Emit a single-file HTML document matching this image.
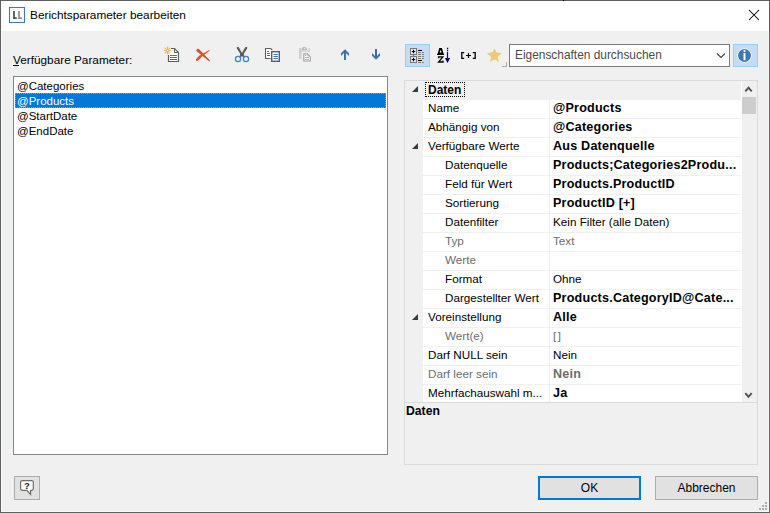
<!DOCTYPE html>
<html><head><meta charset="utf-8">
<style>
*{margin:0;padding:0;box-sizing:border-box}
html,body{width:770px;height:513px;overflow:hidden;background:#f0f0f0}
body{position:relative;font-family:"Liberation Sans",sans-serif;font-size:11.5px;color:#000}
.a{position:absolute}
.t{position:absolute;white-space:nowrap;line-height:15px}
#frame{position:absolute;left:0;top:0;width:770px;height:513px;border:1px solid #5f5f5f}
#frame2{position:absolute;left:1px;top:31px;width:768px;height:481px;border:1px solid #f9f9f9;border-top:0}
#title{position:absolute;left:0;top:0;width:770px;height:31px;background:#fff}
.lb{position:absolute;left:13px;top:76px;width:375px;height:379px;border:1px solid #828790;background:#fff}
.pg{position:absolute;left:404px;top:80px;width:354px;height:385px;border:1px solid #dadada;background:#f0f0f0}
.row{position:absolute;left:18px;width:319px;height:18px;background:#fff}
.nm{position:absolute;left:5px;top:-1px;line-height:18px;white-space:nowrap;font-size:11.7px}
.vl{position:absolute;left:130px;top:-1px;line-height:18px;white-space:nowrap;font-size:11.7px}
.vl.b{font-size:12.6px;letter-spacing:0.2px}
.dv{position:absolute;left:126px;top:0;width:1px;height:18px;background:#f0f0f0}
.b{font-weight:bold}
.g{color:#6d6d6d}
.nm.ind{left:22px}
.tri{position:absolute;left:7px;width:0;height:0;border-style:solid;border-width:0 0 6px 6px;border-color:transparent transparent #3a3a3a transparent}
.btn{position:absolute;top:476px;height:24px;background:#e1e1e1;border:1px solid #adadad;text-align:center;line-height:22px;font-size:12px}
</style></head><body>
<div id="win0">
  <div id="title">
    <!-- app icon -->
    <svg class="a" style="left:0;top:0" width="30" height="30" viewBox="0 0 30 30">
      <rect x="9.5" y="7.5" width="15" height="15" fill="#fff" stroke="#3a78b8" stroke-width="1.1"/>
      <path d="M14 11 V18.2 H16.8" fill="none" stroke="#4e4e4e" stroke-width="1.7"/>
      <path d="M19 11 V18.2 H21.9" fill="none" stroke="#8e8e8e" stroke-width="1.7"/>
    </svg>
    <div class="t" style="left:30px;top:8px;font-size:11.83px">Berichtsparameter bearbeiten</div>
    <svg class="a" style="left:748px;top:9px" width="12" height="12" viewBox="0 0 12 12"><path d="M1 1 L11 11 M11 1 L1 11" stroke="#000" stroke-width="1.05"/></svg>
  </div>

  <!-- left label -->
  <div class="t" style="left:13px;top:53px;font-size:11.8px">Verfügbare Parameter:</div>
  <div class="a" style="left:13px;top:65px;width:6px;height:1px;background:#000"></div>

  <!-- toolbar icons -->
<svg class="a" style="left:0;top:0" width="770" height="513" viewBox="0 0 770 513">
<!-- new doc -->
<path d="M168.5 55 V61.5 H178.5 V52.5 L174.5 48.5 H171" fill="#fff" stroke="#5f5f5f" stroke-width="1.2"/>
<path d="M174.5 48.5 V52.5 H178.5" fill="none" stroke="#5f5f5f" stroke-width="1"/>
<path d="M170 55.5 H177 M170 57.5 H177 M170 59.5 H177" stroke="#3c74b4" stroke-width="1"/>
<g stroke="#e9b35f" stroke-width="1.1">
<circle cx="167.5" cy="50.5" r="1.3" fill="none"/>
<path d="M167.5 46.8 V48.7 M167.5 52.3 V54.2 M163.8 50.5 H165.7 M169.3 50.5 H171.2 M164.9 47.9 L166.2 49.2 M168.8 51.8 L170.1 53.1 M170.1 47.9 L168.8 49.2 M166.2 51.8 L164.9 53.1"/>
</g>
<!-- red X -->
<path d="M196.3 50.2 C197 48.6 198.4 48.6 199.4 49.4 L210 60.6 L209.4 61.4 L197.6 52 C196.6 51.4 196.1 50.9 196.3 50.2 Z" fill="#d9522b"/>
<path d="M209.8 50.4 L209.3 49.9 L200 55.2 C198.2 56.6 196.6 58.2 196 59.6 C195.8 60.6 196.8 61.2 197.6 60.8 C199 59.8 201 57.4 202 56.4 Z" fill="#d9522b"/>
<!-- scissors -->
<path d="M236.8 47.3 C237.4 46.9 238.4 46.9 238.9 47.4 L242.8 54.2 L241.4 55.4 L237.3 49.2 C236.8 48.5 236.6 47.8 236.8 47.3 Z" fill="#5a5a5a"/>
<path d="M247.2 47.3 C246.6 46.9 245.6 46.9 245.1 47.4 L241.2 54.2 L242.6 55.4 L246.7 49.2 C247.2 48.5 247.4 47.8 247.2 47.3 Z" fill="#5a5a5a"/>
<path d="M240.4 53.2 L243.6 53.2 L244.6 57 L243 57.4 L242 55.8 L241 57.4 L239.4 57 Z" fill="#5a5a5a"/>
<circle cx="238" cy="59" r="2.6" fill="none" stroke="#4180c4" stroke-width="1.2"/>
<circle cx="246" cy="59" r="2.6" fill="none" stroke="#4180c4" stroke-width="1.2"/>
<!-- copy -->
<path d="M270.5 58.5 H265.5 V48.5 H270.5 L272.3 50" fill="#fff" stroke="#5f5f5f" stroke-width="1.1"/>
<path d="M267 51.5 H269 M267 53.5 H270 M267 55.5 H270" stroke="#3c74b4" stroke-width="1"/>
<rect x="271.7" y="51.7" width="7.6" height="9.6" fill="#fff" stroke="#5f5f5f" stroke-width="1.4"/>
<path d="M273.5 54.5 H277.8 M273.5 56.5 H277.8 M273.5 58.5 H277.8" stroke="#3c74b4" stroke-width="1"/>
<!-- paste disabled -->
<rect x="299" y="48" width="2.5" height="11" fill="#d0d0d0"/>
<rect x="301" y="50.3" width="9" height="1.3" fill="#d0d0d0"/>
<rect x="308.5" y="48" width="1.4" height="3.5" fill="#d0d0d0"/>
<path d="M302 49.9 V48.6 C302 47.5 303 47 304.4 47 C305.8 47 306.8 47.5 306.8 48.6 V49.9 Z M304.4 47.8 a0.7 0.7 0 1 0 0.01 0 Z" fill="#b8b8b8" fill-rule="evenodd"/>
<path d="M303.8 53.8 H307.4 L310.3 56.7 V61 H303.8 Z" fill="#fff" stroke="#a4a4a4" stroke-width="1.2"/>
<rect x="305" y="54.8" width="1.2" height="1.2" fill="#b4b4b4"/>
<circle cx="308.2" cy="55.6" r="0.9" fill="#b4b4b4"/>
<path d="M305 57.5 H309 M305 59.4 H309" stroke="#b0b0b0" stroke-width="1"/>
<!-- up arrow -->
<path d="M345 49.2 L349 53.2 V55.9 L346 52.9 V60 H344 V52.9 L341 55.9 V53.2 Z" fill="#3a72b0"/>
<!-- down arrow -->
<path d="M376 59.8 L380 55.8 V53.1 L377 56.1 V49 H375 V56.1 L372 53.1 V55.8 Z" fill="#3a72b0"/>
</svg>

  <!-- right toolbar -->
<svg class="a" style="left:0;top:0" width="770" height="513" viewBox="0 0 770 513">
<!-- categorized button -->
<rect x="405.5" y="44.5" width="24" height="22" fill="#c4ddf3" stroke="#99cdf6" stroke-width="1"/>
<rect x="410.5" y="48.5" width="6" height="6" fill="#d8ecfa" stroke="#7d7572" stroke-width="1"/>
<rect x="410.5" y="56.5" width="6" height="6" fill="#d8ecfa" stroke="#7d7572" stroke-width="1"/>
<path d="M413.5 55 V56" stroke="#7d7572"/>
<path d="M411.8 51.5 H415.2 M413.5 49.8 V53.2 M411.8 59.5 H415.2 M413.5 57.8 V61.2" stroke="#000" stroke-width="1.15"/>
<path d="M418 50.5 H422 M418 60.5 H422" stroke="#000" stroke-width="1"/>
<path d="M418 52.5 H421 M422 52.5 H424 M418 54.5 H421 M422 54.5 H424 M418 56.5 H421 M422 56.5 H424 M418 58.5 H421 M422 58.5 H424 M418 62.5 H421 M422 62.5 H424" stroke="#8a7f75" stroke-width="1"/>
<!-- AZ -->
<path d="M439.3 48 H441.9 L443.6 53.8 H444.1 V55 H437 V53.8 H437.6 Z M440.2 50.6 L439.6 52.6 H441.6 L441 50.6 Z" fill="#000" fill-rule="evenodd"/>
<path d="M438.6 58.2 V56.8 H442.8 L438.6 62 H443 V60.4" fill="none" stroke="#000" stroke-width="1.3"/>
<rect x="446.9" y="47.7" width="1.3" height="1.3" fill="#000080"/>
<rect x="446.9" y="49.7" width="1.3" height="1.3" fill="#000080"/>
<path d="M447.5 51.8 V59" stroke="#000080" stroke-width="1.2"/>
<path d="M444.9 58 H450.1 L447.5 62.9 Z" fill="#000080"/>
<!-- [+] -->
<path d="M464.2 52.7 H461.8 V58.3 H464.2 M472.8 52.7 H475.2 V58.3 H472.8" fill="none" stroke="#000" stroke-width="1.3"/>
<path d="M466 55.5 H471 M468.5 53 V58" stroke="#000" stroke-width="1.2"/>
<!-- star -->
<path d="M494.45 48.3 L496.3 52.3 L501.8 53.3 L497.6 57 L499 62 L494.45 59.4 L489.9 62 L491.3 57 L487.1 53.3 L492.6 52.3 Z" fill="#eec778"/>
<path d="M506.5 62 V66.5 H502" fill="none" stroke="#a8a8a8" stroke-width="1"/>
<!-- combobox -->
<rect x="509.5" y="44.5" width="220" height="22" fill="#fff" stroke="#7a7a7a" stroke-width="1"/>
<path d="M717 53.5 L721 57.5 L725 53.5" fill="none" stroke="#404040" stroke-width="1.1"/>
<!-- info button -->
<rect x="733.5" y="44.5" width="24" height="22" fill="#c4ddf3" stroke="#99cdf6" stroke-width="1"/>
<circle cx="744.5" cy="55.5" r="7.2" fill="#fff"/>
<circle cx="744.5" cy="55.5" r="6.5" fill="#3f77b1"/>
<rect x="743.4" y="50" width="2.2" height="2" rx="0.8" fill="#fff"/>
<rect x="743.5" y="53" width="2" height="7.2" fill="#fff"/>
</svg>
<div class="t" style="left:515px;top:48px;font-size:11.9px;color:#4a4a4a">Eigenschaften durchsuchen</div>

  <!-- listbox -->
  <div class="lb">
    <div class="t" style="left:3px;top:2px">@Categories</div>
    <div class="a" style="left:1px;top:16px;width:371px;height:15px;background:#0078d7;outline:1px dotted #ff8728;outline-offset:-1px"></div>
    <div class="t" style="left:3px;top:17px;color:#fff">@Products</div>
    <div class="t" style="left:3px;top:32px">@StartDate</div>
    <div class="t" style="left:3px;top:47px">@EndDate</div>
  </div>

  <!-- property grid -->
  <div class="pg" id="pg">
<div class="tri" style="top:5px"></div>
<div class="a" style="left:20px;top:1px;width:40px;height:15px;border:1px dotted #000"></div>
<div class="t b" style="left:23px;top:1px;font-size:12px;line-height:18px;top:0">Daten</div>
<div class="row" style="top:19px"><div class="nm">Name</div><div class="dv"></div><div class="vl b">@Products</div></div>
<div class="row" style="top:38px"><div class="nm">Abhängig von</div><div class="dv"></div><div class="vl b">@Categories</div></div>
<div class="row" style="top:57px"><div class="nm">Verfügbare Werte</div><div class="dv"></div><div class="vl b">Aus Datenquelle</div></div>
<div class="tri" style="top:62px"></div>
<div class="row" style="top:76px"><div class="nm ind">Datenquelle</div><div class="dv"></div><div class="vl b">Products;Categories2Produ...</div></div>
<div class="row" style="top:95px"><div class="nm ind">Feld für Wert</div><div class="dv"></div><div class="vl b">Products.ProductID</div></div>
<div class="row" style="top:114px"><div class="nm ind">Sortierung</div><div class="dv"></div><div class="vl b">ProductID [+]</div></div>
<div class="row" style="top:133px"><div class="nm ind">Datenfilter</div><div class="dv"></div><div class="vl ">Kein Filter (alle Daten)</div></div>
<div class="row" style="top:152px"><div class="nm ind g">Typ</div><div class="dv"></div><div class="vl g">Text</div></div>
<div class="row" style="top:171px"><div class="nm ind g">Werte</div><div class="dv"></div><div class="vl g"></div></div>
<div class="row" style="top:190px"><div class="nm ind">Format</div><div class="dv"></div><div class="vl ">Ohne</div></div>
<div class="row" style="top:209px"><div class="nm ind">Dargestellter Wert</div><div class="dv"></div><div class="vl b">Products.CategoryID@Cate...</div></div>
<div class="row" style="top:228px"><div class="nm">Voreinstellung</div><div class="dv"></div><div class="vl b">Alle</div></div>
<div class="tri" style="top:233px"></div>
<div class="row" style="top:247px"><div class="nm ind g">Wert(e)</div><div class="dv"></div><div class="vl g" style="letter-spacing:1.5px">[]</div></div>
<div class="row" style="top:266px"><div class="nm">Darf NULL sein</div><div class="dv"></div><div class="vl ">Nein</div></div>
<div class="row" style="top:285px"><div class="nm g">Darf leer sein</div><div class="dv"></div><div class="vl b g">Nein</div></div>
<div class="row" style="top:304px"><div class="nm">Mehrfachauswahl m...</div><div class="dv"></div><div class="vl b">Ja</div></div>
<svg class="a" style="left:338px;top:4px" width="13" height="9" viewBox="0 0 13 9"><path d="M2.3 6.3 L5.5 2.6 L8.7 6.3" fill="none" stroke="#505050" stroke-width="1.9"/></svg>
<div class="a" style="left:336px;top:0;width:1px;height:321px;background:#fff"></div>
<div class="a" style="left:337px;top:16px;width:14px;height:17px;background:#cdcdcd"></div>
<svg class="a" style="left:338px;top:309px" width="13" height="9" viewBox="0 0 13 9"><path d="M2.3 3.2 L5.5 6.9 L8.7 3.2" fill="none" stroke="#505050" stroke-width="1.9"/></svg>
<div class="a" style="left:0;top:321px;width:352px;height:62px;background:#f0f0f0;border-top:1px solid #dadada"></div>
<div class="t b" style="left:1px;top:321px;font-size:12.2px;line-height:18px">Daten</div>
  </div>

  <!-- bottom buttons -->
  <div class="btn" style="left:14px;width:26px"></div>
  <svg class="a" style="left:0;top:460px" width="60" height="53" viewBox="0 460 60 53">
    <path d="M22.3 480.6 H31.6 Q33.3 480.6 33.3 482.3 V488.6 Q33.3 490.3 31.6 490.3 H30.6 V494.4 L26.9 490.3 H22.3 Q20.6 490.3 20.6 488.6 V482.3 Q20.6 480.6 22.3 480.6 Z" fill="#fff" stroke="#6e6e6e" stroke-width="1.2"/>
    <text x="26.9" y="489" font-family="Liberation Sans" font-weight="bold" font-size="9.5" text-anchor="middle" fill="#222">?</text>
  </svg>
  <svg class="a" style="left:755px;top:498px" width="15" height="15" viewBox="755 498 15 15">
    <path d="M765 502h2v2h-2zM762 505h2v2h-2zM765 505h2v2h-2zM759 508h2v2h-2zM762 508h2v2h-2zM765 508h2v2h-2z" fill="#adadad"/>
  </svg>
  <div class="btn" style="left:538px;width:103px;border:2px solid #0078d7;line-height:20px">OK</div>
  <div class="btn" style="left:655px;width:103px">Abbrechen</div>
<div id="frame2"></div><div id="frame"></div><div class="a" style="left:563px;top:0;width:1px;height:1px;background:#000"></div>
</div>
</body></html>
